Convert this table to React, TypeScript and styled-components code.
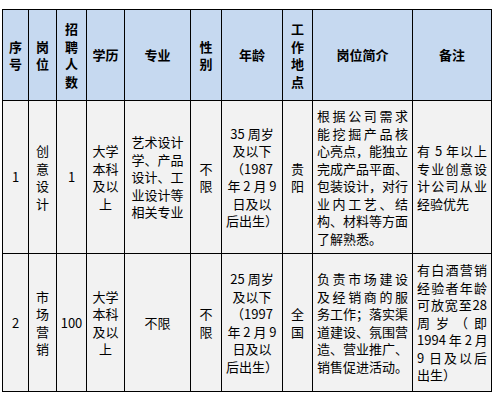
import styled, { createGlobalStyle } from 'styled-components'

const GlobalStyle = createGlobalStyle`
  body {
    margin: 0;
    background: #ffffff;
    font-family: "Noto Sans CJK SC", "Noto Sans", sans-serif;
    color: #000000;
  }
`

const Page = styled.div`
  padding: 9px 0 0 2px;
`

const Table = styled.table`
  border-collapse: collapse;
  table-layout: fixed;
  width: 490px;
  font-size: 13px;
  line-height: 17.5px;
`

const HeadCell = styled.th`
  background: #c6d9f0;
  border: 1px solid #000;
  font-weight: 700;
  text-align: center;
  vertical-align: middle;
  padding: 0 3px;
  height: 90px;
`

const Row = styled.tr<{ $h: number }>`
  height: ${(p) => p.$h}px;
`

const Cell = styled.td<{ $align?: 'left' | 'center' }>`
  background: #f2f2f2;
  border: 1px solid #000;
  text-align: ${(p) => p.$align ?? 'center'};
  vertical-align: middle;
  padding: 0 3px;
  word-break: break-all;
`

const TextBlock = styled.div`
  padding: 0 1px;
`

const Line = styled.span<{ $last?: boolean }>`
  display: block;
  white-space: nowrap;
  text-align: ${(p) => (p.$last ? 'left' : 'justify')};
  text-align-last: ${(p) => (p.$last ? 'left' : 'justify')};
`

const columns = [26, 28, 30, 38, 66, 31, 61, 30, 100, 79]
const headers = ['序号', '岗位', '招聘人数', '学历', '专业', '性别', '年龄', '工作地点', '岗位简介', '备注']

type Job = {
  no: string
  post: string
  count: string
  edu: string
  major: string
  gender: string
  age: string[]
  place: string
  intro: string[]
  introLastJustify?: boolean
  note: string[]
}

const jobs: Job[] = [
  {
    no: '1',
    post: '创意设计',
    count: '1',
    edu: '大学本科及以上',
    major: '艺术设计学、产品设计、工业设计等相关专业',
    gender: '不限',
    age: ['35 周岁', '及以下', '（1987', '年 2 月 9', '日及以', '后出生）'],
    place: '贵阳',
    intro: [
      '根据公司需求',
      '能挖掘产品核',
      '心亮点，能独立',
      '完成产品平面、',
      '包装设计，对行',
      '业内工艺、结',
      '构、材料等方面',
      '了解熟悉。',
    ],
    note: ['有 5 年以上', '专业创意设', '计公司从业', '经验优先'],
  },
  {
    no: '2',
    post: '市场营销',
    count: '100',
    edu: '大学本科及以上',
    major: '不限',
    gender: '不限',
    age: ['25 周岁', '及以下', '（1997', '年 2 月 9', '日及以', '后出生）'],
    place: '全国',
    intro: [
      '负责市场建设',
      '及经销商的服',
      '务工作；落实渠',
      '道建设、氛围营',
      '造、营业推广、',
      '销售促进活动。',
    ],
    introLastJustify: true,
    note: ['有白酒营销', '经验者年龄', '可放宽至28', '周 岁 （ 即', '1994 年 2 月', '9 日及以后', '出生）'],
  },
]

function Lines({ lines, lastJustify }: { lines: string[]; lastJustify?: boolean }) {
  return (
    <TextBlock>
      {lines.map((l, i) => (
        <Line key={i} $last={i === lines.length - 1 && !lastJustify}>
          {l}
        </Line>
      ))}
    </TextBlock>
  )
}

export default function App() {
  return (
    <>
      <GlobalStyle />
      <Page>
        <Table>
          <colgroup>
            {columns.map((w, i) => (
              <col key={i} style={{ width: w }} />
            ))}
          </colgroup>
          <thead>
            <tr>
              {headers.map((h) => (
                <HeadCell key={h}>{h}</HeadCell>
              ))}
            </tr>
          </thead>
          <tbody>
            {jobs.map((j, idx) => (
              <Row key={j.no} $h={idx === 0 ? 153 : 138}>
                <Cell>{j.no}</Cell>
                <Cell>{j.post}</Cell>
                <Cell>{j.count}</Cell>
                <Cell>{j.edu}</Cell>
                <Cell>{j.major}</Cell>
                <Cell>{j.gender}</Cell>
                <Cell>
                  {j.age.map((a, i) => (
                    <div key={i}>{a}</div>
                  ))}
                </Cell>
                <Cell>{j.place}</Cell>
                <Cell $align="left">
                  <Lines lines={j.intro} lastJustify={j.introLastJustify} />
                </Cell>
                <Cell $align="left">
                  <Lines lines={j.note} />
                </Cell>
              </Row>
            ))}
          </tbody>
        </Table>
      </Page>
    </>
  )
}
